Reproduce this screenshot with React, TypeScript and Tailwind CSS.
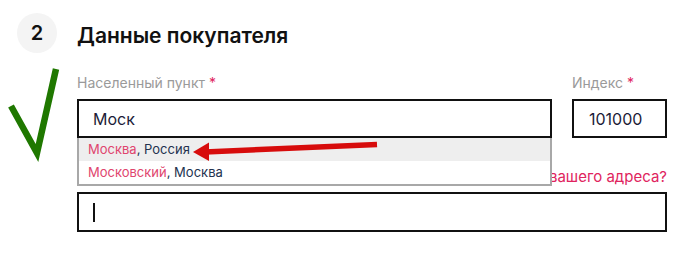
import React from "react";

export default function App() {
  const font = { fontFamily: "Inter, 'Noto Sans', sans-serif" };
  return (
    <div className="relative w-[695px] h-[259px] bg-white overflow-hidden" style={font}>
      {/* header */}
      <div className="flex items-center pt-[13px] pl-[17px] gap-5">
        <div className="w-10 h-10 rounded-full bg-[#f4f4f4] flex items-center justify-center text-[20px] font-semibold text-[#111]">
          2
        </div>
        <div className="text-[21px] font-semibold text-[#111] leading-none pt-[4px]">
          Данные покупателя
        </div>
      </div>

      {/* form */}
      <div className="pl-[77px] pt-[20px]">
        <div className="flex gap-5">
          <div className="w-[475px] relative">
            <div className="text-[14px] leading-5 text-[#9a9a9a] h-5">
              Населенный пункт <span className="text-[#e0245e]">*</span>
            </div>
            <div className="mt-[6px] h-[39px] border-2 border-[#111] flex items-center pl-[14px] text-[16px] text-[#1c1c38]">
              Моск
            </div>
            <div className="absolute left-0 right-0 top-full z-10 bg-white border-x-2 border-b-2 border-[#a8a8a8] text-[13px]">
              <div className="h-[23px] bg-[#eeeeee] flex items-center pl-[9px]">
                <span className="text-[#e0456e]">Москва</span>
                <span className="text-[#23324f]">, Россия</span>
              </div>
              <div className="h-[23px] flex items-center pl-[9px]">
                <span className="text-[#e0456e]">Московский</span>
                <span className="text-[#23324f]">, Москва</span>
              </div>
            </div>
          </div>
          <div className="w-[95px]">
            <div className="text-[14px] leading-5 text-[#9a9a9a] h-5">
              Индекс <span className="text-[#e0245e]">*</span>
            </div>
            <div className="mt-[6px] h-[39px] border-2 border-[#111] flex items-center pl-[15px] text-[16px] text-[#1c1c38]">
              101000
            </div>
          </div>
        </div>
        <div className="w-[590px] text-right text-[15px] leading-5 text-[#e0245e] mt-[29px]">
          Не нашли в списке вашего адреса?
        </div>
        <div className="w-[590px] mt-[5px] h-[40px] border-2 border-[#111] flex items-center pl-[14px]">
          <div className="w-[2px] h-[19px] bg-[#111]" />
        </div>
      </div>

      {/* annotations */}
      <svg className="absolute left-0 top-0 pointer-events-none z-20" width="695" height="259">
        <polyline points="11,106 37,153 56,69" fill="none" stroke="#1f7800" strokeWidth="6.5" strokeLinejoin="miter" />
        <line x1="377" y1="144.5" x2="205" y2="152" stroke="#d70c0c" strokeWidth="5.5" />
        <polygon points="193,152 209,142.5 209,161" fill="#d70c0c" />
      </svg>
    </div>
  );
}
